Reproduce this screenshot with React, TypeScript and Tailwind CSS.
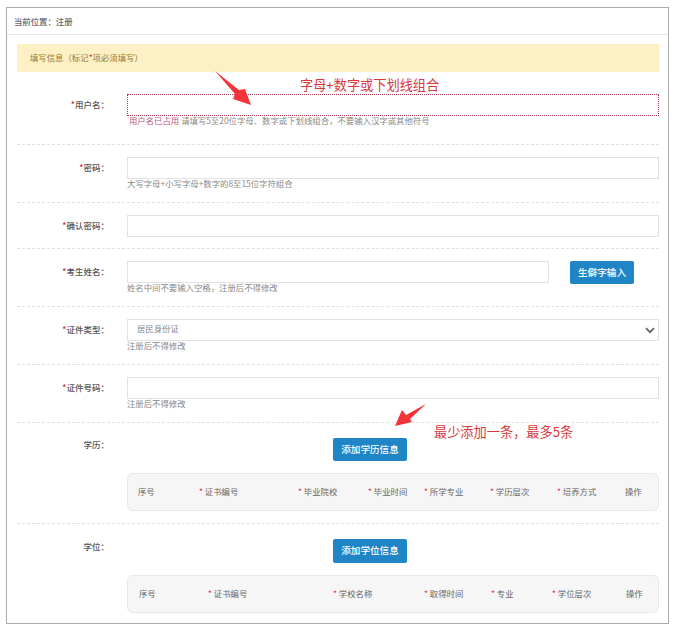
import React from "react";

const font = { fontFamily: '"Noto Sans CJK SC", "Liberation Sans", sans-serif' };

function Label({ text, required = true }: { text: string; required?: boolean }) {
  return (
    <div className="w-[92px] h-[20px] mr-[18px] shrink-0 flex items-center justify-end text-[8.5px] font-medium text-[#555]">
      {required && <span className="text-[#c9302c]">*</span>}
      <span>{text}：</span>
    </div>
  );
}

function Hint({ children }: { children: React.ReactNode }) {
  return <div className="h-[11px] leading-[9px] text-[8.4px] text-[#888] whitespace-nowrap">{children}</div>;
}

function Input({ error }: { error?: boolean }) {
  return (
    <input
      className={
        error
          ? "block w-full h-[22px] border border-dotted border-[#a0354f] bg-white outline-none"
          : "block w-full h-[22px] border border-[#e2e2e2] bg-white outline-none"
      }
    />
  );
}

function Row({ label, hint, className }: { label: string; hint?: React.ReactNode; className: string }) {
  return (
    <div className={"flex border-b border-dashed border-[#e0e0e0] " + className}>
      <Label text={label} />
      <div className="flex-1 min-w-0">
        <Input />
        {hint && <Hint>{hint}</Hint>}
      </div>
    </div>
  );
}

function TableHead({ cols, pad }: { cols: { t: string; w: string; req?: boolean }[]; pad: string }) {
  return (
    <div className={"h-[38px] rounded-[6px] border border-[#e8e8e8] bg-[#f6f6f6] flex items-center pb-[2px] text-[8.4px] text-[#666] " + pad}>
      {cols.map((c) => (
        <div key={c.t} className={"shrink-0 whitespace-nowrap " + c.w}>
          {c.req && <span className="text-[#e0344f]">* </span>}
          {c.t}
        </div>
      ))}
    </div>
  );
}

function BlueButton({ text, className }: { text: string; className: string }) {
  return (
    <button className={"bg-[#1f85c7] text-white text-[9.6px] font-medium rounded-[2px] flex items-center justify-center pb-[1px] " + className}>
      {text}
    </button>
  );
}

export default function App() {
  return (
    <div className="relative w-[676px] h-[631px] bg-white overflow-hidden pt-[7px] pl-[6px]" style={font}>
      <div className="w-[663px] h-[617px] border border-[#aaaaaa] bg-white">
        <div className="h-[27px] border-b border-[#e6e6e6] flex items-center pl-[7px] text-[8.4px] font-medium text-[#666]">
          当前位置：注册
        </div>
        <div className="mx-[10px] w-[642px]">
          <div className="mt-[9px] h-[28px] bg-[#fdf0c5] flex items-center pl-[13px] pb-[2px] text-[8.4px] text-[#9a7b2c]">
            填写信息（标记<span className="text-[#c9302c]">*</span>项必须填写）
          </div>

          <div className="flex border-b border-dashed border-[#e0e0e0] pt-[22px] pb-[17px]">
            <Label text="用户名" />
            <div className="flex-1 min-w-0">
              <Input error />
              <Hint>
                <span className="text-[#c0567a] ml-[2px]">用户名已占用</span> 请填写5至20位字母、数字或下划线组合，不要输入汉字或其他符号
              </Hint>
            </div>
          </div>

          <Row label="密码" className="pt-[12px] pb-[12px]" hint="大写字母+小写字母+数字的8至15位字符组合" />
          <Row label="确认密码" className="pt-[12px] pb-[11px]" />

          <div className="flex border-b border-dashed border-[#e0e0e0] pt-[12px] pb-[12px]">
            <Label text="考生姓名" />
            <div className="w-[422px] shrink-0">
              <Input />
              <Hint>姓名中间不要输入空格，注册后不得修改</Hint>
            </div>
            <BlueButton text="生僻字输入" className="ml-[21px] w-[64px] h-[23px]" />
          </div>

          <div className="flex border-b border-dashed border-[#e0e0e0] pt-[12px] pb-[12px]">
            <Label text="证件类型" />
            <div className="flex-1 min-w-0">
              <div className="h-[22px] border border-[#e2e2e2] flex items-center justify-between pl-[9px] pr-[3px] text-[8.4px] text-[#888]">
                <span className="mb-[3px]">居民身份证</span>
                <svg width="10" height="7" viewBox="0 0 10 7" fill="none">
                  <path d="M1 1.2 L5 5.2 L9 1.2" stroke="#666" strokeWidth="1.8" />
                </svg>
              </div>
              <Hint>注册后不得修改</Hint>
            </div>
          </div>

          <Row label="证件号码" className="pt-[12px] pb-[12px]" hint="注册后不得修改" />

          <div className="flex border-b border-dashed border-[#e0e0e0] pt-[15px] pb-[12px]">
            <div className="w-[92px] mr-[18px] shrink-0 h-[12px] flex items-center justify-end text-[8.5px] font-medium text-[#555]">
              学历：
            </div>
            <div className="flex-1 min-w-0">
              <BlueButton text="添加学历信息" className="ml-[206px] w-[74px] h-[23px]" />
              <div className="mt-[12px]">
                <TableHead
                  pad="pl-[10px]"
                  cols={[
                    { t: "序号", w: "w-[61px]" },
                    { t: "证书编号", w: "w-[99px]", req: true },
                    { t: "毕业院校", w: "w-[70px]", req: true },
                    { t: "毕业时间", w: "w-[56px]", req: true },
                    { t: "所学专业", w: "w-[66px]", req: true },
                    { t: "学历层次", w: "w-[67px]", req: true },
                    { t: "培养方式", w: "w-[68px]", req: true },
                    { t: "操作", w: "w-[30px]" },
                  ]}
                />
              </div>
            </div>
          </div>

          <div className="flex pt-[15px]">
            <div className="w-[92px] mr-[18px] shrink-0 h-[14px] flex items-center justify-end text-[8.5px] font-medium text-[#555]">
              学位：
            </div>
            <div className="flex-1 min-w-0">
              <BlueButton text="添加学位信息" className="ml-[206px] w-[74px] h-[24px]" />
              <div className="mt-[12px]">
                <TableHead
                  pad="pl-[11px]"
                  cols={[
                    { t: "序号", w: "w-[69px]" },
                    { t: "证书编号", w: "w-[125px]", req: true },
                    { t: "学校名称", w: "w-[91px]", req: true },
                    { t: "取得时间", w: "w-[67px]", req: true },
                    { t: "专业", w: "w-[61px]", req: true },
                    { t: "学位层次", w: "w-[74px]", req: true },
                    { t: "操作", w: "w-[30px]" },
                  ]}
                />
              </div>
            </div>
          </div>
        </div>
      </div>

      {/* Annotations over the form */}
      <svg className="absolute left-0 top-0 pointer-events-none" width="676" height="631" viewBox="0 0 676 631">
        <polygon points="215,71 239,90 245,89 251,105 233,99 235,94" fill="#f5333a" />
        <polygon points="426,404 410,419 412,422 395,426 402,410 406,415" fill="#f5333a" />
      </svg>
      <div className="absolute left-[300px] top-[76px] text-[13.2px] leading-[18px] text-[#d9383c] whitespace-nowrap">
        字母+数字或下划线组合
      </div>
      <div className="absolute left-[434px] top-[423px] text-[13.2px] leading-[18px] text-[#d9383c] whitespace-nowrap">
        最少添加一条，最多5条
      </div>
    </div>
  );
}
